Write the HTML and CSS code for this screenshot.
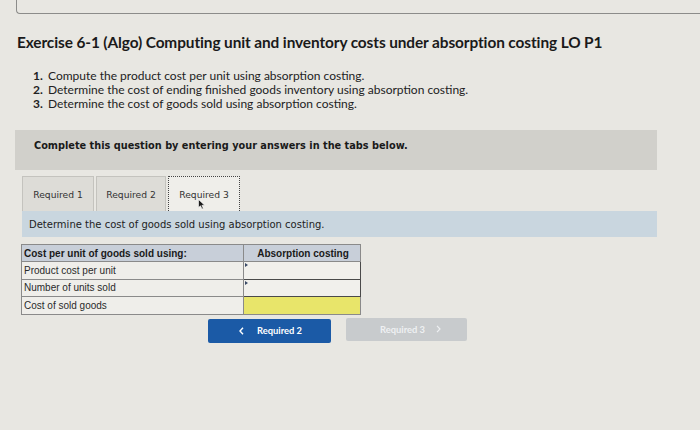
FILE: index.html
```html
<!DOCTYPE html>
<html>
<head>
<meta charset="utf-8">
<link rel="stylesheet" href="styles.css">
</head>
<body>
<div class="topbox"></div>
<h1 class="title">Exercise 6-1 (Algo) Computing unit and inventory costs under absorption costing LO P1</h1>
<ol class="tasks">
  <li><span class="num">1.</span>Compute the product cost per unit using absorption costing.</li>
  <li><span class="num">2.</span>Determine the cost of ending finished goods inventory using absorption costing.</li>
  <li><span class="num">3.</span>Determine the cost of goods sold using absorption costing.</li>
</ol>
<div class="banner">Complete this question by entering your answers in the tabs below.</div>
<div class="tabs">
  <div class="tab">Required 1</div>
  <div class="tab">Required 2</div>
  <div class="tab active">Required 3<svg class="cursor" width="8" height="11" viewBox="0 0 8 11"><path d="M0.5 0.5 L0.5 8.5 L2.5 6.8 L4 10 L5.3 9.4 L3.9 6.3 L6.6 6.2 Z" fill="#1a1a1a" stroke="#fff" stroke-width="0.6"/></svg></div>
</div>
<div class="prompt">Determine the cost of goods sold using absorption costing.</div>
<table class="grid">
  <tr class="head"><th class="label">Cost per unit of goods sold using:</th><th class="val">Absorption costing</th></tr>
  <tr><td class="label">Product cost per unit</td><td class="input"><span class="flag"></span></td></tr>
  <tr><td class="label">Number of units sold</td><td class="input"><span class="flag"></span></td></tr>
  <tr><td class="label">Cost of sold goods</td><td class="input yellow"></td></tr>
</table>
<div class="nav">
  <div class="btn prev"><svg class="chev" width="5" height="8" viewBox="0 0 5 8"><path d="M4 0.8 L1 4 L4 7.2" fill="none" stroke="#fff" stroke-width="1.4"/></svg>Required 2</div>
  <div class="btn next">Required 3<svg class="chev" width="5" height="8" viewBox="0 0 5 8"><path d="M1 0.8 L4 4 L1 7.2" fill="none" stroke="#eef0f2" stroke-width="1.2"/></svg></div>
</div>
</body>
</html>
```
FILE: styles.css
```css
html, body {
  margin: 0;
  padding: 0;
}
body {
  background: #e8e7e2;
  width: 700px;
  height: 430px;
  overflow: hidden;
  font-family: "Liberation Sans", Arial, sans-serif;
  color: #1e1e1e;
}
.topbox {
  margin-left: 16px;
  height: 13px;
  border-left: 1px solid #8c8c8a;
  border-bottom: 1px solid #8c8c8a;
  border-bottom-left-radius: 4px;
}
.title {
  margin: 19px 0 0 17px;
  font-family: Lato, sans-serif;
  font-weight: 700;
  font-size: 15.4px;
  line-height: 19px;
  color: #1a1a1a;
  letter-spacing: -0.1px;
}
.tasks {
  list-style: none;
  margin: 17px 0 0 33px;
  padding: 0;
  font-family: Lato, sans-serif;
  font-size: 12px;
  line-height: 14px;
  color: #222;
}
.tasks li {
  display: flex;
}
.num {
  font-weight: 700;
  width: 15px;
}
.banner {
  margin: 19px 43px 0 15px;
  height: 40px;
  box-sizing: border-box;
  padding: 10px 0 0 19px;
  background: #d1d0cb;
  font-family: "DejaVu Sans", Verdana, sans-serif;
  font-weight: 700;
  font-size: 9.75px;
  line-height: 12px;
  color: #1a1a1a;
}
.tabs {
  display: flex;
  margin: 6px 0 0 22px;
  gap: 2px;
  height: 35px;
}
.tab {
  position: relative;
  width: 72px;
  box-sizing: border-box;
  background: #dddcd7;
  border: 1px solid #c4c3be;
  border-bottom: none;
  font-family: "DejaVu Sans", Verdana, sans-serif;
  font-size: 9.2px;
  color: #333;
  display: flex;
  align-items: center;
  justify-content: center;
  padding-top: 1px;
}
.tab:nth-child(2) { width: 70px; }
.tab.active {
  background: #efeeea;
  border: 1.5px dotted #444;
  border-bottom: none;
}
.cursor {
  position: absolute;
  left: 29px;
  top: 22px;
}
.prompt {
  margin: 0 43px 0 22px;
  height: 26px;
  box-sizing: border-box;
  padding: 8px 0 0 7px;
  background: #c9d6df;
  font-family: "DejaVu Sans", Verdana, sans-serif;
  font-size: 10px;
  line-height: 12px;
  color: #222;
}
.grid {
  margin: 7px 0 0 21px;
  border-collapse: collapse;
  font-size: 10px;
}
.grid th, .grid td {
  border: 1px solid #8a8a8a;
  height: 17.5px;
  padding: 0 0 0 2px;
  box-sizing: border-box;
}
.grid .head th {
  background: #c8cfd9;
  height: 17px;
  font-weight: 700;
  color: #1a1a1a;
}
.grid .label {
  width: 222px;
  text-align: left;
  background: #efeeea;
  color: #2a2a2a;
}
.grid .head .label { background: #c8cfd9; }
.grid .val {
  width: 117px;
  text-align: center;
}
.grid .input {
  position: relative;
  background: #f1f0ec;
  border: 1.5px solid #4a4a4a;
}
.grid .input.yellow {
  background: #e8e56a;
  border: 1px solid #8a8a8a;
}
.flag {
  position: absolute;
  left: 1px;
  top: 1px;
  width: 0;
  height: 0;
  border-top: 2.5px solid transparent;
  border-bottom: 2.5px solid transparent;
  border-left: 3px solid #3a4a66;
}
.nav {
  display: flex;
  margin: 4px 0 0 208px;
  gap: 15px;
  align-items: flex-start;
}
.btn {
  width: 123px;
  height: 24px;
  box-sizing: border-box;
  border-radius: 2px;
  display: flex;
  align-items: center;
  justify-content: center;
  font-family: Lato, sans-serif;
  font-weight: 700;
  font-size: 9.4px;
}
.btn.prev {
  background: #1b5aa6;
  color: #fff;
  padding-left: 2px;
}
.btn.prev .chev {
  margin-right: 13px;
}
.btn.next {
  width: 121px;
  height: 23px;
  margin-top: -1px;
  background: #c8cbcd;
  color: #eef0f2;
  padding-left: 8px;
}
.btn.next .chev {
  margin-left: 11px;
}
```
